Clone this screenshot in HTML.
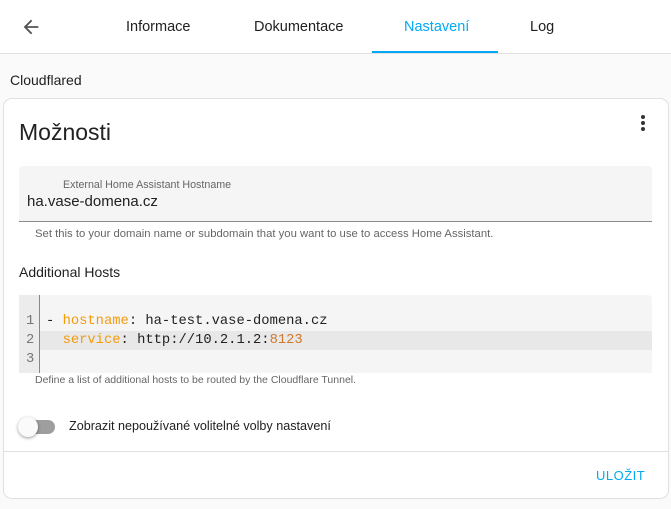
<!DOCTYPE html>
<html><head><meta charset="utf-8"><style>
*{box-sizing:border-box;margin:0;padding:0}
body{width:671px;height:509px;background:#fafafa;font-family:"Liberation Sans",sans-serif;color:#212121;position:relative;overflow:hidden}
.a{position:absolute;white-space:nowrap}
.hdr{position:absolute;left:0;top:0;width:671px;height:54px;background:#fff;border-bottom:1px solid #e0e0e0}
.tab{position:absolute;top:19px;font-size:14.5px;color:#212121}
.card{position:absolute;left:3px;top:98px;width:666px;height:401px;background:#fff;border:1px solid #e0e0e0;border-radius:9px}
.mono{font-family:"Liberation Mono",monospace;font-size:13.8px;white-space:pre}
</style></head><body>
<div class="hdr">
<svg class="a" style="left:20px;top:16px" width="22" height="22" viewBox="0 0 24 24"><path d="M20 11H7.83l5.59-5.59L12 4l-8 8 8 8 1.41-1.41L7.83 13H20z" fill="#555"/></svg>
<div class="tab" style="left:126px">Informace</div>
<div class="tab" style="left:254px">Dokumentace</div>
<div class="tab" style="left:404px;color:#03a9f4">Nastavení</div>
<div class="tab" style="left:530px">Log</div>
<div class="a" style="left:372px;top:51px;width:126px;height:2px;background:#03a9f4"></div>
</div>
<div class="a" style="left:10px;top:72px;font-size:14px">Cloudflared</div>
<div class="card"></div>
<div class="a" style="left:19px;top:119px;font-size:23px">Možnosti</div>
<div class="a" style="left:641px;top:115px;width:4px;height:4px;border-radius:2px;background:#333"></div>
<div class="a" style="left:641px;top:121px;width:4px;height:4px;border-radius:2px;background:#333"></div>
<div class="a" style="left:641px;top:127px;width:4px;height:4px;border-radius:2px;background:#333"></div>
<div class="a" style="left:19px;top:166px;width:633px;height:56px;background:#f5f5f5;border-radius:4px 4px 0 0;border-bottom:1px solid #8a8a8a"></div>
<div class="a" style="left:63px;top:179px;font-size:10.7px;color:#666">External Home Assistant Hostname</div>
<div class="a" style="left:27px;top:193px;font-size:15px">ha.vase-domena.cz</div>
<div class="a" style="left:35px;top:228px;font-size:11.3px;color:#666">Set this to your domain name or subdomain that you want to use to access Home Assistant.</div>
<div class="a" style="left:19px;top:264px;font-size:14px">Additional Hosts</div>
<div class="a" style="left:19px;top:295px;width:633px;height:78px;background:#f5f5f5;border-radius:4px 4px 0 0"></div>
<div class="a" style="left:19px;top:295px;width:21px;height:78px;background:#ececec;border-right:1px solid #888"></div>
<div class="a" style="left:40px;top:331px;width:612px;height:19px;background:#e8e8e8"></div>
<div class="a mono" style="left:26px;top:312px;color:#777;line-height:19px">1
2
3</div>
<div class="a mono" style="left:46px;top:312px;line-height:19px;color:#222">- <span style="color:#f59a0b">hostname</span>: ha-test.vase-domena.cz
  <span style="color:#f59a0b">service</span>: http://10.2.1.2:<span style="color:#d2772a">8123</span></div>
<div class="a" style="left:35px;top:374px;font-size:10.5px;color:#666">Define a list of additional hosts to be routed by the Cloudflare Tunnel.</div>
<div class="a" style="left:20px;top:420px;width:35px;height:14px;border-radius:7px;background:#9e9e9e"></div>
<div class="a" style="left:18px;top:417px;width:20px;height:20px;border-radius:10px;background:#fafafa;box-shadow:0 1px 3px rgba(0,0,0,.4)"></div>
<div class="a" style="left:69px;top:419px;font-size:12.6px">Zobrazit nepoužívané volitelné volby nastavení</div>
<div class="a" style="left:4px;top:451px;width:664px;height:1px;background:#e0e0e0"></div>
<div class="a" style="left:596px;top:468px;font-size:13px;color:#03a9f4;letter-spacing:0.5px">ULOŽIT</div>
</body></html>
